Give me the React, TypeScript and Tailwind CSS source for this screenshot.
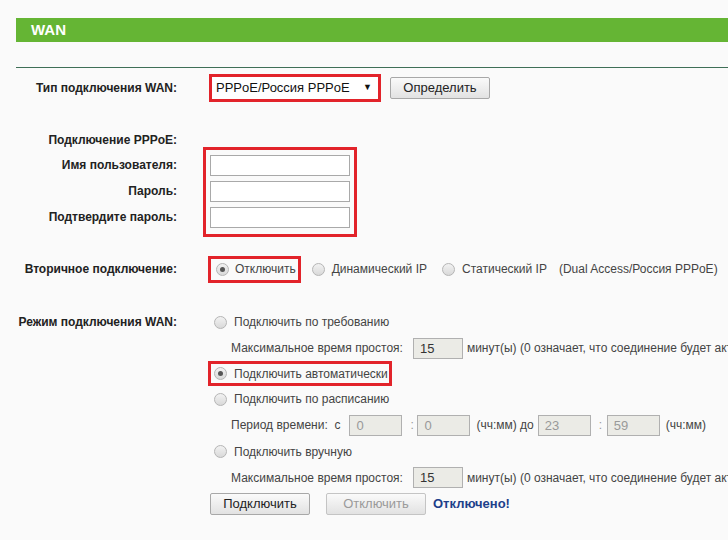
import React from 'react';

const Radio: React.FC<{ checked?: boolean }> = ({ checked }) => (
  <span className="inline-flex h-[13px] w-[13px] shrink-0 items-center justify-center rounded-full border border-[#b5b5b5] bg-gradient-to-b from-[#f2f2f2] to-[#d9d9d9]">
    {checked && <span className="h-[5px] w-[5px] rounded-full bg-[#555]" />}
  </span>
);

const Label: React.FC<{ children: React.ReactNode }> = ({ children }) => (
  <div className="w-[177px] shrink-0 text-right font-bold text-[#222]">{children}</div>
);

const GreyInput: React.FC<{ value: string; w: string; dim?: boolean }> = ({ value, w, dim }) => (
  <div className={`${w} h-[21px] border border-[#b0b0b0] bg-[#ebebe6] pl-[6px] text-[13px] leading-[19px] ${dim ? 'text-[#999]' : 'text-[#333]'}`}>
    {value}
  </div>
);

const Btn: React.FC<{ children: React.ReactNode; disabled?: boolean }> = ({ children, disabled }) => (
  <div
    className={`flex h-[22px] w-[100px] items-center justify-center rounded-[2px] border bg-gradient-to-b from-[#fafafa] to-[#e2e2e2] text-[13px] ${
      disabled ? 'border-[#c4c4c4] text-[#9a9a9a]' : 'border-[#a8a8a8] text-[#222]'
    }`}
  >
    {children}
  </div>
);

const App: React.FC = () => {
  return (
    <div className="h-[540px] w-[728px] overflow-hidden bg-[#fafafa] font-['Liberation_Sans',Arial,sans-serif] text-[12px] text-[#444]">
      <div className="h-[18px]" />
      <div className="ml-4 h-6 bg-[#65b534] pl-[15px] text-[15px] font-bold leading-6 text-white">WAN</div>
      <div className="ml-4 mt-[25px] h-px bg-[#3f6f57]" />

      {/* Тип подключения */}
      <div className="mt-[6px] flex h-[28px] items-center">
        <Label>Тип подключения WAN:</Label>
        <div className="ml-[32px] flex h-[28px] w-[172px] items-center justify-between border-[3px] border-[#e2232a] bg-white pl-[4px] pr-[6px] text-[13px] text-[#111]">
          <span>PPPoE/Россия PPPoE</span>
          <span className="text-[9px]">▼</span>
        </div>
        <div className="ml-[9px]">
          <Btn>Определить</Btn>
        </div>
      </div>

      {/* PPPoE */}
      <div className="mt-[28px] flex h-[20px] items-center">
        <Label>Подключение PPPoE:</Label>
      </div>
      <div className="-mt-[3px] flex">
        <div className="flex flex-col pt-[5px]">
          <div className="flex h-[26px] items-center"><Label>Имя пользователя:</Label></div>
          <div className="flex h-[26px] items-center"><Label>Пароль:</Label></div>
          <div className="flex h-[26px] items-center"><Label>Подтвердите пароль:</Label></div>
        </div>
        <div className="ml-[26px] flex flex-col border-[3px] border-[#e2232a] px-[4px] pt-[2px] pb-[4px]">
          <div className="flex h-[26px] items-center"><div className="h-[21px] w-[140px] border border-[#a9a9a9] bg-white" /></div>
          <div className="flex h-[26px] items-center"><div className="h-[21px] w-[140px] border border-[#a9a9a9] bg-white" /></div>
          <div className="flex h-[26px] items-center"><div className="h-[21px] w-[140px] border border-[#a9a9a9] bg-white" /></div>
        </div>
      </div>

      {/* Вторичное подключение */}
      <div className="mt-[19px] flex h-[26px] items-center">
        <Label>Вторичное подключение:</Label>
        <div className="ml-[31px] flex h-[27px] items-center gap-[6px] border-[3px] border-[#e2232a] pl-[5px] pr-[2px]">
          <Radio checked />
          <span>Отключить</span>
        </div>
        <div className="ml-[11px] flex items-center gap-[7px]">
          <Radio />
          <span>Динамический IP</span>
        </div>
        <div className="ml-[15px] flex items-center gap-[7px]">
          <Radio />
          <span>Статический IP</span>
        </div>
        <span className="ml-[12px]">(Dual Access/Россия PPPoE)</span>
      </div>

      {/* Режим подключения */}
      <div className="mt-[27px] flex">
        <Label>
          <div className="flex h-[26px] items-center justify-end">Режим подключения WAN:</div>
        </Label>
        <div className="ml-[31px] flex flex-col whitespace-nowrap">
          <div className="flex h-[26px] items-center gap-[7px] pl-[6px]">
            <Radio />
            <span>Подключить по требованию</span>
          </div>
          <div className="flex h-[26px] items-center pl-[23px]">
            <span>Максимальное время простоя:</span>
            <div className="ml-[10px]"><GreyInput value="15" w="w-[50px]" /></div>
            <span className="ml-[4px]">минут(ы) (0 означает, что соединение будет активно всегда)</span>
          </div>
          <div className="flex h-[25px] items-center">
            <div className="flex h-[25px] w-[184px] items-center gap-[7px] border-[3px] border-[#e2232a] pl-[3px]">
              <Radio checked />
              <span>Подключить автоматически</span>
            </div>
          </div>
          <div className="flex h-[26px] items-center gap-[7px] pl-[6px]">
            <Radio />
            <span>Подключить по расписанию</span>
          </div>
          <div className="flex h-[26px] items-center pl-[23px]">
            <span>Период времени:&nbsp; с</span>
            <div className="ml-[9px]"><GreyInput value="0" w="w-[53px]" dim /></div>
            <span className="ml-[8px] w-[7px] text-[#999]">:</span>
            <GreyInput value="0" w="w-[53px]" dim />
            <span className="ml-[6px]">(чч:мм) до</span>
            <div className="ml-[4px]"><GreyInput value="23" w="w-[53px]" dim /></div>
            <span className="ml-[8px] w-[8px] text-[#999]">:</span>
            <GreyInput value="59" w="w-[53px]" dim />
            <span className="ml-[6px]">(чч:мм)</span>
          </div>
          <div className="flex h-[27px] items-center gap-[7px] pl-[6px]">
            <Radio />
            <span>Подключить вручную</span>
          </div>
          <div className="flex h-[25px] items-center pl-[23px]">
            <span>Максимальное время простоя:</span>
            <div className="ml-[10px]"><GreyInput value="15" w="w-[50px]" /></div>
            <span className="ml-[4px]">минут(ы) (0 означает, что соединение будет активно всегда)</span>
          </div>
          <div className="mt-[2px] flex h-[24px] items-center pl-[2px]">
            <Btn>Подключить</Btn>
            <div className="ml-[16px]"><Btn disabled>Отключить</Btn></div>
            <span className="ml-[7px] text-[13px] font-bold text-[#1d3f8a]">Отключено!</span>
          </div>
        </div>
      </div>
    </div>
  );
};

export default App;
